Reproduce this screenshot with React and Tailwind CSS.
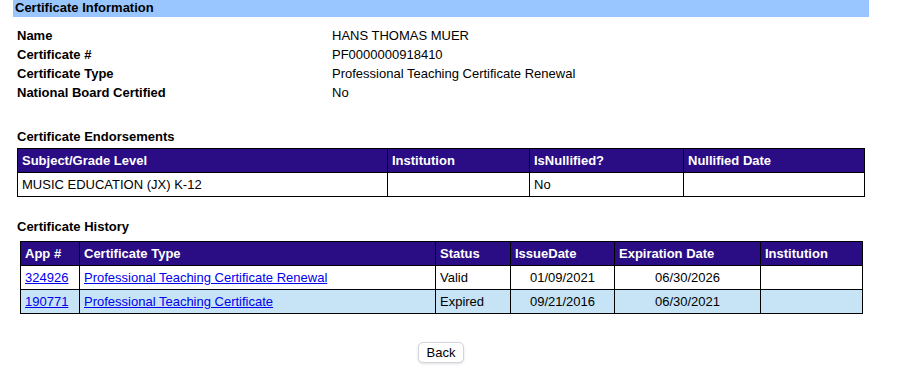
const info = [
  ["Name", "HANS THOMAS MUER"],
  ["Certificate #", "PF0000000918410"],
  ["Certificate Type", "Professional Teaching Certificate Renewal"],
  ["National Board Certified", "No"],
]

const history = [
  { app: "324926", type: "Professional Teaching Certificate Renewal", status: "Valid", issue: "01/09/2021", exp: "06/30/2026" },
  { app: "190771", type: "Professional Teaching Certificate", status: "Expired", issue: "09/21/2016", exp: "06/30/2021" },
]

const th = "border border-black bg-[#2a0c85] text-white font-bold text-left px-[4px] h-[24px] py-0"
const td = "border border-black px-[4px] h-[24px] py-0"

export default function App() {
  return (
    <div className="w-[903px] h-[368px] bg-white text-[13px] text-black font-['Liberation_Sans',Arial,sans-serif]">
      <div className="ml-[13px] w-[856px]">
        {/* Encabezado */}
        <div className="bg-[#99c6ff] h-[17px] leading-[15px] px-[2px] font-bold">Certificate Information</div>

        <div className="pt-[9px] pl-[4px]">
          {info.map(([k, v]) => (
            <div key={k} className="flex leading-[19px]">
              <div className="w-[315px] font-bold">{k}</div>
              <div>{v}</div>
            </div>
          ))}
        </div>

        {/* Endorsements */}
        <div className="mt-[25px] pl-[4px] font-bold leading-[19px]">Certificate Endorsements</div>
        <table className="mt-[2px] ml-[4px] w-[847px] border-collapse table-fixed">
          <colgroup>
            <col className="w-[370px]" />
            <col className="w-[142px]" />
            <col className="w-[154px]" />
            <col className="w-[181px]" />
          </colgroup>
          <thead>
            <tr>
              <th className={th}>Subject/Grade Level</th>
              <th className={th}>Institution</th>
              <th className={th}>IsNullified?</th>
              <th className={th}>Nullified Date</th>
            </tr>
          </thead>
          <tbody>
            <tr>
              <td className={td}>MUSIC EDUCATION (JX) K-12</td>
              <td className={td}></td>
              <td className={td}>No</td>
              <td className={td}></td>
            </tr>
          </tbody>
        </table>

        {/* History */}
        <div className="mt-[20px] pl-[4px] font-bold leading-[19px]">Certificate History</div>
        <table className="mt-[5px] ml-[7px] w-[842px] border-collapse table-fixed">
          <colgroup>
            <col className="w-[59px]" />
            <col className="w-[356px]" />
            <col className="w-[75px]" />
            <col className="w-[104px]" />
            <col className="w-[146px]" />
            <col className="w-[102px]" />
          </colgroup>
          <thead>
            <tr>
              <th className={th}>App #</th>
              <th className={th}>Certificate Type</th>
              <th className={th}>Status</th>
              <th className={th}>IssueDate</th>
              <th className={th}>Expiration Date</th>
              <th className={th}>Institution</th>
            </tr>
          </thead>
          <tbody>
            {history.map((h, i) => (
              <tr key={h.app} className={i % 2 === 1 ? "bg-[#c6e4f5]" : "bg-white"}>
                <td className={td}><a href="#" className="text-[#0000ee] underline">{h.app}</a></td>
                <td className={td}><a href="#" className="text-[#0000ee] underline">{h.type}</a></td>
                <td className={td}>{h.status}</td>
                <td className={td + " text-center"}>{h.issue}</td>
                <td className={td + " text-center"}>{h.exp}</td>
                <td className={td}></td>
              </tr>
            ))}
          </tbody>
        </table>

        <div className="flex justify-center mt-[28px]">
          <button className="h-[21px] px-[8px] bg-white border border-gray-300 rounded-[5px] shadow-sm text-[13px] leading-none">Back</button>
        </div>
      </div>
    </div>
  )
}
